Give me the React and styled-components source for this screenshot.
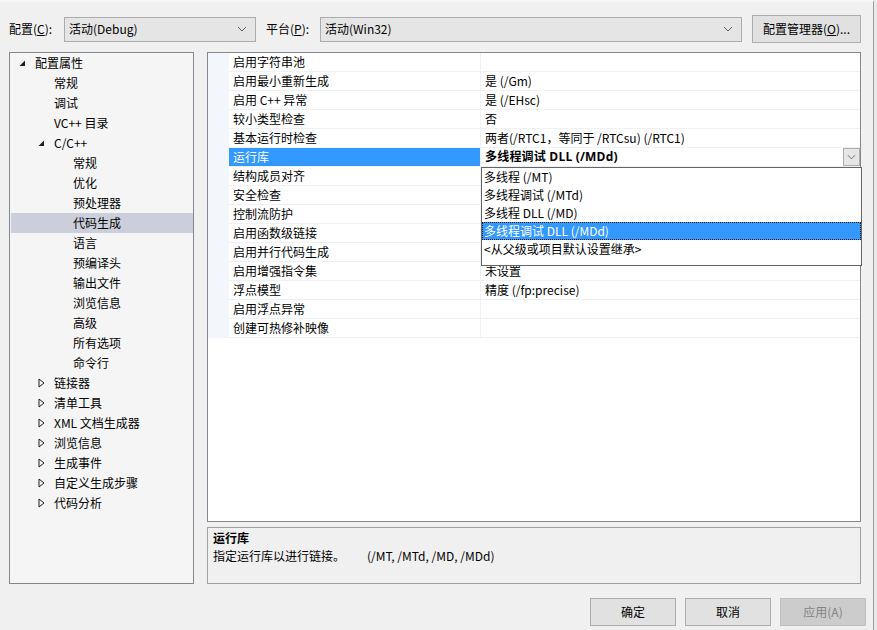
import React from 'react';
import styled, { createGlobalStyle } from 'styled-components';

const Global = createGlobalStyle`
  html, body { margin: 0; padding: 0; background: #e9e9e9; }
  body {
    font-family: "Noto Sans CJK SC", "Noto Sans", sans-serif;
    font-size: 12px;
    color: #000;
  }
  * { box-sizing: border-box; }
`;

const Dialog = styled.div`
  width: 874px;
  height: 630px;
  background: #f0f0f0;
  border-right: 1px solid #9a9a9a;
  border-top: 2px solid #f7f7f7;
  display: flex;
  flex-direction: column;
  padding: 13px 12px 0 9px;
`;

const TopBar = styled.div`
  display: flex;
  align-items: center;
  height: 28px;
`;

const Label = styled.span`
  line-height: 16px;
  width: ${p => p.$w}px;
  flex: none;
`;

const Combo = styled.div`
  width: ${p => p.$w}px;
  height: 25px;
  flex: none;
  background: #e5e5e5;
  border: 1px solid #acacac;
  display: flex;
  align-items: center;
  justify-content: space-between;
  padding: 0 8px 0 4px;
  margin-right: ${p => p.$mr || 0}px;
  line-height: 16px;
`;

const Button = styled.div`
  width: ${p => p.$w}px;
  height: ${p => p.$h || 28}px;
  flex: none;
  display: flex;
  align-items: center;
  justify-content: center;
  background: ${p => (p.$disabled ? '#cccccc' : '#e1e1e1')};
  border: 1px solid ${p => (p.$disabled ? '#bfbfbf' : '#adadad')};
  color: ${p => (p.$disabled ? '#838383' : '#000')};
  line-height: 16px;
`;

const Main = styled.div`
  display: flex;
  gap: 13px;
  margin-top: 9px;
  height: 532px;
`;

const Tree = styled.div`
  width: 185px;
  flex: none;
  background: #f5f5f5;
  border: 1px solid #828790;
  padding: 0 0 0 1px;
`;

const TreeRow = styled.div`
  height: 20px;
  display: flex;
  align-items: center;
  padding-left: ${p => 8 + p.$level * 19}px;
  background: ${p => (p.$selected ? '#cccedb' : 'transparent')};
  line-height: 16px;
`;

const Toggle = styled.span`
  width: 16px;
  flex: none;
  display: flex;
  align-items: center;
`;

const RightCol = styled.div`
  flex: 1;
  display: flex;
  flex-direction: column;
  gap: 5px;
`;

const Grid = styled.div`
  position: relative;
  height: 470px;
  background: #fff;
  border: 1px solid #828790;
`;

const GridRow = styled.div`
  display: flex;
  height: 19px;
`;

const Gutter = styled.div`
  width: 21px;
  flex: none;
  background: #f3f6fb;
`;

const NameCell = styled.div`
  width: 252px;
  flex: none;
  padding-left: 4px;
  display: flex;
  align-items: center;
  line-height: 16px;
  border-bottom: 1px solid #eef1f6;
  border-right: 1px solid #eef1f6;
  background: ${p => (p.$selected ? '#3399ff' : '#fff')};
  color: ${p => (p.$selected ? '#fff' : '#000')};
`;

const ValueCell = styled.div`
  flex: 1;
  padding-left: 4px;
  display: flex;
  align-items: center;
  justify-content: space-between;
  line-height: 16px;
  border-bottom: 1px solid #eef1f6;
`;

const BoldValue = styled.span`
  font-family: "Open Sans", "Noto Sans CJK SC", sans-serif;
  font-weight: 700;
  letter-spacing: 0.2px;
`;

const DropButton = styled.div`
  width: 17px;
  height: 18px;
  background: #e6e6e6;
  border: 1px solid #adadad;
  display: flex;
  align-items: center;
  justify-content: center;
  align-self: flex-start;
`;

const DropList = styled.div`
  position: absolute;
  left: 273px;
  top: 114px;
  width: 381px;
  height: 99px;
  background: #fff;
  border: 1px solid #646464;
`;

const DropItem = styled.div`
  height: 18px;
  display: flex;
  align-items: center;
  padding-left: 2px;
  line-height: 16px;
  background: ${p => (p.$selected ? '#3399ff' : '#fff')};
  color: ${p => (p.$selected ? '#fff' : '#000')};
  outline: ${p => (p.$selected ? '1px dotted #1a1a1a' : 'none')};
  outline-offset: -1px;
`;

const Desc = styled.div`
  height: 57px;
  background: #f0f0f0;
  border: 1px solid #a0a0a0;
  padding: 1px 5px;
  line-height: 18px;
`;

const DescTitle = styled.div`
  font-weight: 700;
`;

const Options = styled.span`
  margin-left: 22px;
`;

const Footer = styled.div`
  display: flex;
  justify-content: flex-end;
  gap: 9px;
  margin-top: 14px;
  margin-right: -5px;
`;

const Chevron = ({ w = 10 }) => (
  <svg width={w} height="6" viewBox="0 0 10 6">
    <polyline points="1,1 5,5 9,1" fill="none" stroke="#606060" strokeWidth="1" />
  </svg>
);

const Expanded = () => (
  <svg width="7" height="7" viewBox="0 0 7 7">
    <polygon points="6,0.5 6,6 0.5,6" fill="#1e1e1e" />
  </svg>
);

const Collapsed = () => (
  <svg width="7" height="10" viewBox="0 0 7 10">
    <polygon points="1,1 6,5 1,9" fill="none" stroke="#1e1e1e" strokeWidth="1" />
  </svg>
);

const tree = [
  { t: '配置属性', l: 0, e: 'open' },
  { t: '常规', l: 1 },
  { t: '调试', l: 1 },
  { t: 'VC++ 目录', l: 1 },
  { t: 'C/C++', l: 1, e: 'open' },
  { t: '常规', l: 2 },
  { t: '优化', l: 2 },
  { t: '预处理器', l: 2 },
  { t: '代码生成', l: 2, sel: true },
  { t: '语言', l: 2 },
  { t: '预编译头', l: 2 },
  { t: '输出文件', l: 2 },
  { t: '浏览信息', l: 2 },
  { t: '高级', l: 2 },
  { t: '所有选项', l: 2 },
  { t: '命令行', l: 2 },
  { t: '链接器', l: 1, e: 'closed' },
  { t: '清单工具', l: 1, e: 'closed' },
  { t: 'XML 文档生成器', l: 1, e: 'closed' },
  { t: '浏览信息', l: 1, e: 'closed' },
  { t: '生成事件', l: 1, e: 'closed' },
  { t: '自定义生成步骤', l: 1, e: 'closed' },
  { t: '代码分析', l: 1, e: 'closed' },
];

const props = [
  ['启用字符串池', ''],
  ['启用最小重新生成', '是 (/Gm)'],
  ['启用 C++ 异常', '是 (/EHsc)'],
  ['较小类型检查', '否'],
  ['基本运行时检查', '两者(/RTC1，等同于 /RTCsu) (/RTC1)'],
  ['运行库', '多线程调试 DLL (/MDd)', true],
  ['结构成员对齐', ''],
  ['安全检查', ''],
  ['控制流防护', ''],
  ['启用函数级链接', ''],
  ['启用并行代码生成', ''],
  ['启用增强指令集', '未设置'],
  ['浮点模型', '精度 (/fp:precise)'],
  ['启用浮点异常', ''],
  ['创建可热修补映像', ''],
];

const options = [
  '多线程 (/MT)',
  '多线程调试 (/MTd)',
  '多线程 DLL (/MD)',
  '多线程调试 DLL (/MDd)',
  '<从父级或项目默认设置继承>',
];

export default function App() {
  return (
    <>
      <Global />
      <Dialog>
        <TopBar>
          <Label $w={55}>配置(<u>C</u>):</Label>
          <Combo $w={192} $mr={10}>
            <span>活动(Debug)</span>
            <Chevron />
          </Combo>
          <Label $w={54}>平台(<u>P</u>):</Label>
          <Combo $w={422} $mr={10}>
            <span>活动(Win32)</span>
            <Chevron />
          </Combo>
          <Button $w={109}>配置管理器(<u>O</u>)...</Button>
        </TopBar>
        <Main>
          <Tree>
            {tree.map((n, i) => (
              <TreeRow key={i} $level={n.l} $selected={n.sel}>
                <Toggle>
                  {n.e === 'open' && <Expanded />}
                  {n.e === 'closed' && <Collapsed />}
                </Toggle>
                {n.t}
              </TreeRow>
            ))}
          </Tree>
          <RightCol>
            <Grid>
              {props.map(([name, value, sel], i) => (
                <GridRow key={i}>
                  <Gutter />
                  <NameCell $selected={sel}>{name}</NameCell>
                  <ValueCell>
                    {sel ? <BoldValue>{value}</BoldValue> : <span>{value}</span>}
                    {sel && (
                      <DropButton>
                        <Chevron w={9} />
                      </DropButton>
                    )}
                  </ValueCell>
                </GridRow>
              ))}
              <DropList>
                {options.map((o, i) => (
                  <DropItem key={i} $selected={i === 3}>{o}</DropItem>
                ))}
              </DropList>
            </Grid>
            <Desc>
              <DescTitle>运行库</DescTitle>
              <div>
                指定运行库以进行链接。<Options>(/MT, /MTd, /MD, /MDd)</Options>
              </div>
            </Desc>
          </RightCol>
        </Main>
        <Footer>
          <Button $w={86}>确定</Button>
          <Button $w={86}>取消</Button>
          <Button $w={86} $disabled>应用(A)</Button>
        </Footer>
      </Dialog>
    </>
  );
}
